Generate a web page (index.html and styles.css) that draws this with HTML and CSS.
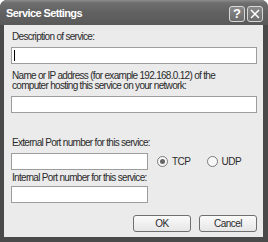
FILE: index.html
```html
<!DOCTYPE html>
<html lang="en">
<head>
    <meta charset="UTF-8">
    <title>Service Settings</title>
    <link rel="stylesheet" href="styles.css">
</head>
<body>

<div class="window">
    <div class="titlebar">
        <span class="title">Service Settings</span>
        <div class="title-buttons">
            <span class="tbtn">?</span>
            <span class="tbtn close">
                <svg width="10" height="10" viewBox="0 0 10 10"><path d="M1 1L9 9M9 1L1 9" stroke="#fff" stroke-width="1.5"/></svg>
            </span>
        </div>
    </div>

    <div class="content">
        <label class="lbl first">Description of service:</label>
        <div class="field wide"><span class="caret"></span></div>

        <label class="lbl two-line">Name or IP address (for example 192.168.0.12) of the<br>computer hosting this service on your network:</label>
        <div class="field wide"></div>

        <label class="lbl port-label">External Port number for this service:</label>
        <div class="port-row">
            <div class="field narrow"></div>
            <span class="radio checked"></span><span class="radio-text">TCP</span>
            <span class="radio"></span><span class="radio-text">UDP</span>
        </div>

        <label class="lbl small-gap">Internal Port number for this service:</label>
        <div class="field narrow tight"></div>

        <div class="actions">
            <button class="btn">OK</button>
            <button class="btn">Cancel</button>
        </div>
    </div>
</div>

</body>
</html>
```

FILE: styles.css
```css
body {
    margin: 0;
    padding: 0;
    background-color: #ffffff;
    font-family: "Liberation Sans", Arial, sans-serif;
}
.window {
    width: 268px;
    height: 242px;
    box-sizing: border-box;
    background-color: #4a4a4a;
    border-radius: 7px 7px 0 0;
    display: flex;
    flex-direction: column;
    overflow: hidden;
}
.titlebar {
    height: 25px;
    flex: none;
    display: flex;
    align-items: center;
    justify-content: space-between;
    padding: 0 5px 0 6px;
    background: linear-gradient(#8c8c8c 0px, #6e6e6e 3px, #626262 12px, #595959 25px);
}
.title {
    color: #ffffff;
    font-weight: bold;
    font-size: 11px;
    letter-spacing: -0.6px;
    margin-top: 1px;
}
.title-buttons {
    display: flex;
    gap: 2px;
    margin-top: 2px;
}
.tbtn {
    width: 14px;
    height: 14px;
    border: 1px solid #d8d8d8;
    border-radius: 3px;
    background: linear-gradient(#8a8a8a, #6c6c6c);
    color: #ffffff;
    font-size: 13px;
    font-weight: bold;
    line-height: 14px;
    text-align: center;
    display: flex;
    align-items: center;
    justify-content: center;
}
.content {
    flex: 1;
    margin: 0 5px 5px 4px;
    background-color: #ebebeb;
    padding: 6px 6px 0 7px;
    display: flex;
    flex-direction: column;
    align-items: flex-start;
}
.lbl {
    display: block;
    font-size: 10px;
    line-height: 10px;
    letter-spacing: -0.7px;
    color: #2a2a2a;
    padding-left: 1px;
}
.first {
    margin-top: 1px;
}
.two-line {
    margin-top: 7px;
}
.port-label {
    margin-top: 25px;
}
.small-gap {
    margin-top: 3px;
}
.field {
    height: 15px;
    border: 1px solid #9d9d9d;
    background-color: #ffffff;
    margin-top: 5px;
    display: flex;
    align-items: center;
}
.field.tight {
    margin-top: 3px;
}
.wide {
    width: 244px;
}
.narrow {
    width: 135px;
}
.caret {
    width: 1px;
    height: 11px;
    margin-left: 2px;
    background-color: #000000;
}
.port-row {
    display: flex;
    align-items: center;
}
.port-row .field {
    margin-right: 9px;
}
.radio {
    width: 9px;
    height: 9px;
    border: 1px solid #7a7a7a;
    border-radius: 50%;
    background-color: #f8f8f8;
    margin-top: 5px;
    display: flex;
    align-items: center;
    justify-content: center;
}
.radio.checked::after {
    content: "";
    width: 5px;
    height: 5px;
    border-radius: 50%;
    background-color: #666666;
}
.radio-text {
    font-size: 10px;
    letter-spacing: -0.5px;
    color: #2a2a2a;
    margin: 5px 16px 0 4px;
}
.actions {
    align-self: flex-end;
    display: flex;
    gap: 8px;
    margin-top: 12px;
}
.btn {
    width: 58px;
    height: 17px;
    padding: 0;
    border: 1px solid #6f6f6f;
    border-radius: 3px;
    background: linear-gradient(#fafafa, #e6e6e6);
    font-family: "Liberation Sans", Arial, sans-serif;
    font-size: 10px;
    letter-spacing: -0.5px;
    color: #2a2a2a;
}
```
